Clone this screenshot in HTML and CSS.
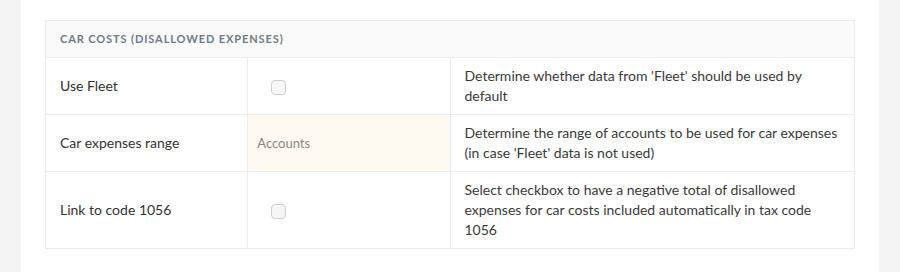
FILE: index.html
```html
<!DOCTYPE html>
<html lang="en">
<head>
    <title>Car costs settings</title>
    <link rel="stylesheet" href="styles.css">
</head>
<body>
    <div class="panel">
        <table class="settings">
            <colgroup>
                <col class="col-label">
                <col class="col-field">
                <col class="col-info">
            </colgroup>
            <thead>
                <tr>
                    <th colspan="3">Car costs (disallowed expenses)</th>
                </tr>
            </thead>
            <tbody>
                <tr>
                    <td class="label">Use Fleet</td>
                    <td class="field"><span class="checkbox"></span></td>
                    <td class="info">Determine whether data from 'Fleet' should be used by default</td>
                </tr>
                <tr>
                    <td class="label">Car expenses range</td>
                    <td class="field input-cell"><span class="placeholder">Accounts</span></td>
                    <td class="info">Determine the range of accounts to be used for car expenses (in case 'Fleet' data is not used)</td>
                </tr>
                <tr>
                    <td class="label">Link to code 1056</td>
                    <td class="field"><span class="checkbox"></span></td>
                    <td class="info">Select checkbox to have a negative total of disallowed expenses for car costs included automatically in tax code 1056</td>
                </tr>
            </tbody>
        </table>
    </div>
</body>
</html>
```

FILE: styles.css
```css
body {
    margin: 0;
    background-color: #f4f4f4;
    font-family: Lato, "Open Sans", sans-serif;
    color: #333;
}
.panel {
    margin: 0 21px;
    padding: 20px 24px;
    min-height: 232px;
    background: white;
}

.settings {
    width: 100%;
    border-collapse: collapse;
    table-layout: fixed;
    font-size: 14px;
    line-height: 20px;
}
.col-label, .col-field {
    width: 25%;
}
.col-info {
    width: 50%;
}
.settings th {
    background-color: #fafafa;
    border: 1px solid #ececec;
    text-align: left;
    padding: 12px 14px 12px;
    height: 12px;
    line-height: 12px;
    font-size: 11px;
    font-weight: bold;
    letter-spacing: 0.9px;
    text-transform: uppercase;
    color: #6e7a88;
}
.settings td {
    border: 1px solid #ececec;
    padding: 8px 14px;
    vertical-align: middle;
}
.settings td.label {
    color: #333;
}
.settings td.field {
    padding-left: 9px;
}
.settings td.info {
    color: #3a3a3a;
}

.input-cell {
    background-color: #fffaf1;
}
.placeholder {
    color: #888;
    font-size: 13px;
}

.checkbox {
    display: inline-block;
    width: 13px;
    height: 13px;
    margin-left: 14px;
    margin-top: 1px;
    border: 1.5px solid #cfcfcf;
    border-radius: 4px;
    background-color: #f6f6f6;
    vertical-align: middle;
}
```
